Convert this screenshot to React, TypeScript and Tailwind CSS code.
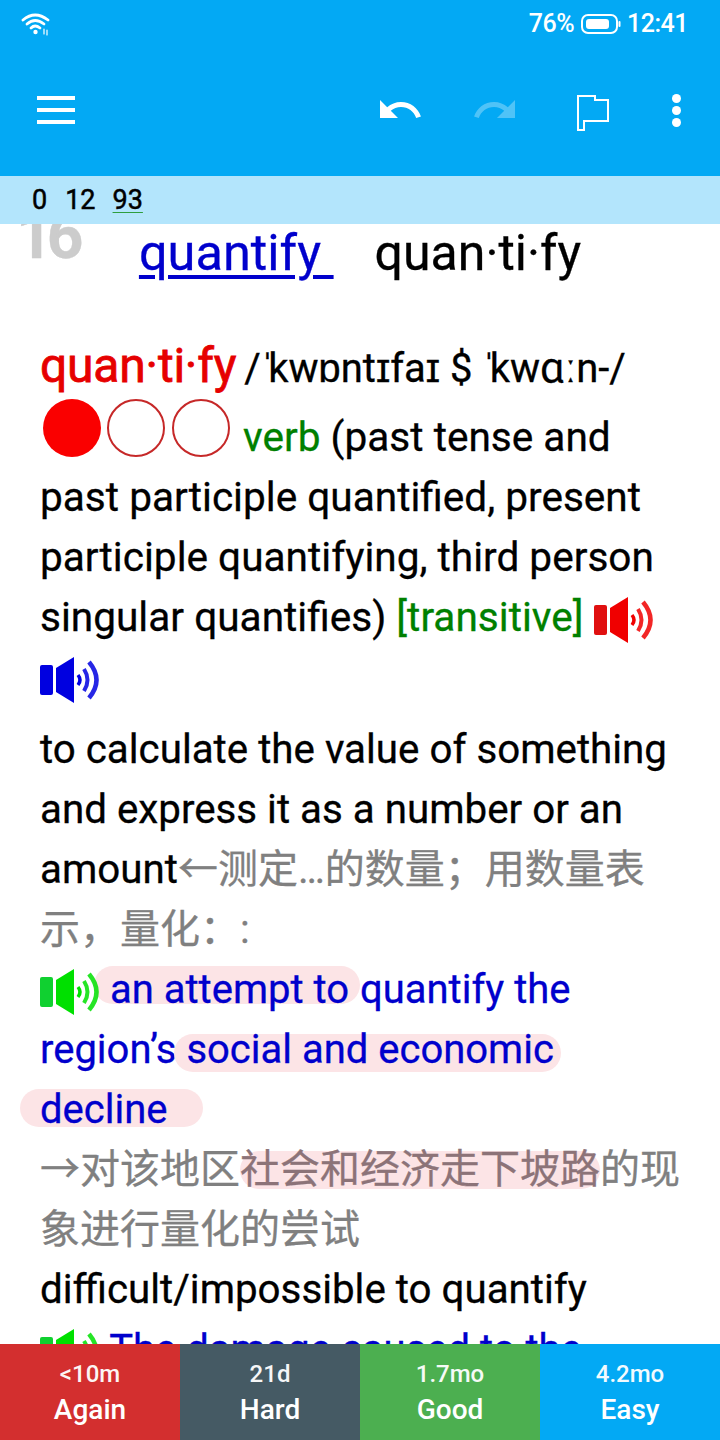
import React from "react";

const FONT = "[font-family:Roboto,'Noto_Sans_CJK_SC',sans-serif]";

function Speaker({ color, light, className = "" }: { color: string; light: string; className?: string }) {
  return (
    <svg viewBox="0 0 60 46" width="60" height="46" className={"inline-block " + className}>
      <rect x="0" y="8" width="13" height="30" rx="2" fill={light} />
      <path d="M16 11 L34 0 V46 L16 35 Z" fill={color} />
      <path d="M38 18 Q42 23 38 28" fill="none" stroke={color} strokeWidth="3.5" />
      <path d="M44 12 Q51 23 44 34" fill="none" stroke={color} strokeWidth="4" opacity="0.85" />
      <path d="M49 5 Q64 23 49 41" fill="none" stroke={color} strokeWidth="4.5" opacity="0.85" />
    </svg>
  );
}

function Btn({ top, label, bg }: { top: string; label: string; bg: string }) {
  return (
    <div className={"flex-1 flex flex-col items-center text-white pt-[14px] " + bg}>
      <div className="text-[24px] leading-[32px] font-medium opacity-95">{top}</div>
      <div className="text-[28px] leading-[40px] font-medium">{label}</div>
    </div>
  );
}

export default function App() {
  return (
    <div className={"w-[720px] h-[1440px] flex flex-col overflow-hidden bg-white relative " + FONT}>
      <header className="h-[176px] bg-[#03a9f4] text-white flex flex-col shrink-0">
        <div className="h-[48px] flex items-center pl-[21px] pr-[32px]">
          <svg width="30" height="24" viewBox="0 0 30 24" fill="none" stroke="white" strokeWidth="2.8" strokeLinecap="round">
            <path d="M2 8 Q14 -2 27 8" />
            <path d="M6 12 Q14 5 23 12" />
            <path d="M10 16 Q14 12 19 16" />
            <circle cx="14.5" cy="20" r="2.2" fill="white" stroke="none" />
            <path d="M23 17 V22 M26 18 V23" strokeWidth="1.2" />
          </svg>
          <div className="ml-auto flex items-center text-[25px] font-medium tracking-[-0.5px]">
            <span>76%</span>
            <svg width="40" height="20" viewBox="0 0 40 20" className="ml-[7px] mr-[6px]">
              <rect x="1" y="1" width="35" height="18" rx="6" fill="none" stroke="white" strokeWidth="2" />
              <rect x="5" y="5" width="23" height="10" rx="3" fill="white" />
              <rect x="37.5" y="7" width="2" height="6" rx="1" fill="white" />
            </svg>
            <span>12:41</span>
          </div>
        </div>
        <div className="flex-1 relative flex items-center pl-[37px] pr-[39px] pb-[4px]">
          <div className="flex flex-col gap-[8px]">
            <div className="w-[38px] h-[4px] bg-white" />
            <div className="w-[38px] h-[4px] bg-white" />
            <div className="w-[38px] h-[4px] bg-white" />
          </div>
          <svg width="48" height="48" viewBox="0 0 24 24" fill="white" className="ml-[301px]">
            <path d="M12.5 8c-2.65 0-5.05.99-6.9 2.6L2 7v9h9l-3.62-3.62c1.39-1.16 3.16-1.88 5.12-1.88 3.54 0 6.55 2.31 7.6 5.5l2.37-.78C21.08 11.03 17.15 8 12.5 8z" />
          </svg>
          <svg width="48" height="48" viewBox="0 0 24 24" fill="white" opacity="0.3" className="ml-[47px]">
            <path d="M18.4 10.6C16.55 8.99 14.15 8 11.5 8c-4.65 0-8.58 3.03-9.96 7.22L3.9 16c1.05-3.19 4.05-5.5 7.6-5.5 1.95 0 3.73.72 5.12 1.88L13 16h9V7l-3.6 3.6z" />
          </svg>
          <svg width="32" height="36" viewBox="0 0 32 36" fill="none" stroke="white" strokeWidth="2" className="ml-[58px] mt-[6px]">
            <path d="M1 35 V1 H18 V5 H31 V26 H7 V35 Z" />
          </svg>
          <div className="ml-auto flex flex-col gap-[3px]">
            <div className="w-[9px] h-[9px] rounded-full bg-white" />
            <div className="w-[9px] h-[9px] rounded-full bg-white" />
            <div className="w-[9px] h-[9px] rounded-full bg-white" />
          </div>
        </div>
      </header>

      <div className="h-[48px] shrink-0 bg-[#b3e5fc] flex items-center pl-[32px] text-[27px] [-webkit-text-stroke:0.5px_black] text-black relative z-10">
        <span>0</span>
        <span className="ml-[18px]">12</span>
        <span className="ml-[17px] underline decoration-[#2e9e3e] decoration-1 underline-offset-[3px]">93</span>
      </div>

      <main className="flex-1 min-h-0 overflow-hidden relative text-[40.3px] leading-[60px] text-black [-webkit-text-stroke:0.3px]">
        <div className="absolute left-[16px] top-[-19px] text-[64px] leading-[64px] font-bold tracking-[-6px] text-[#cccccc]">16</div>
        <div className="h-[58px] flex justify-center items-center text-[50px] leading-[58px]">
          <a className="text-[50.5px] text-[#0000cc] underline decoration-[4px] underline-offset-[5px]">quantify&nbsp;</a>
          <span className="ml-[41px]">quan·ti·fy</span>
        </div>
        <div className="px-[40px] mt-[54px]">
          <div className="text-[40.6px]">
            <span className="text-[48px] leading-[60px] tracking-[-0.2px] text-[#e60000] [-webkit-text-stroke:0.8px]">quan·ti·fy</span>{" "}
            <span className="text-[40px] ml-[-2px]">
              /<span className="tracking-[-6px]">ˈ</span>kwɒntɪfaɪ $ <span className="tracking-[-6px]">ˈ</span>kwɑːn-/
            </span>
            <br />
            <span className="inline-block w-[58px] h-[58px] rounded-full bg-[#fa0000] ml-[3px] align-[-6px]" />
            <span className="inline-block w-[58px] h-[58px] rounded-full border-2 border-[#c62828] ml-[6px] align-[-6px]" />
            <span className="inline-block w-[58px] h-[58px] rounded-full border-2 border-[#c62828] ml-[7px] mr-[3px] align-[-6px]" />{" "}
            <span className="text-[#008000]">verb</span> (past tense and past participle quantified, present
            participle quantifying, third person singular quantifies){" "}
            <span className="text-[#008000]">[transitive]</span>{" "}
            <Speaker color="#f00000" light="#e01010" className="align-[-12px]" />{" "}
            <Speaker color="#0000e0" light="#0000e0" className="align-[-12px]" />
          </div>
          <div className="mt-[13px]">
            to calculate the value of something and express it as a number or an amount
            <span className="text-[40px] text-[#808080]">←测定…的数量；用数量表示，量化：:</span>
          </div>
          <div className="text-[40px] text-[#0000cc]">
            <Speaker color="#00e000" light="#10d030" className="align-[-12px] relative z-10" />
            <span className="inline-block h-[38px] pt-[10px] leading-[28px] rounded-full bg-[#fce4e6] pl-[16px] pr-[11px] ml-[-6px]">
              an attempt to
            </span>
            <span>quantify the region’s</span>
            <span className="inline-block h-[38px] leading-[32px] rounded-full bg-[#fce4e6] pl-[12px] pr-[7px] ml-[-2px]">
              social and economic
            </span>{" "}
            <span className="inline-block h-[38px] pt-[4px] leading-[34px] rounded-full bg-[#fce4e6] pl-[20px] pr-[36px] ml-[-20px]">
              decline
            </span>
          </div>
          <div className="text-[40px] text-[#808080]">
            →对该地区<span className="inline-block h-[38px] leading-[38px] bg-[#fce4e6] rounded-full text-[#8c7378]">社会和经济走下坡路</span>的现象进行量化的尝试
          </div>
          <div>difficult/impossible to quantify</div>
          <div className="text-[40px] text-[#0000cc]">
            <Speaker color="#00e000" light="#10d030" className="align-[-12px]" /> The damage caused to the
          </div>
        </div>
      </main>

      <footer className="h-[96px] shrink-0 flex relative z-10">
        <Btn top="<10m" label="Again" bg="bg-[#d32f2f]" />
        <Btn top="21d" label="Hard" bg="bg-[#455a64]" />
        <Btn top="1.7mo" label="Good" bg="bg-[#4caf50]" />
        <Btn top="4.2mo" label="Easy" bg="bg-[#03a9f4]" />
      </footer>
    </div>
  );
}
